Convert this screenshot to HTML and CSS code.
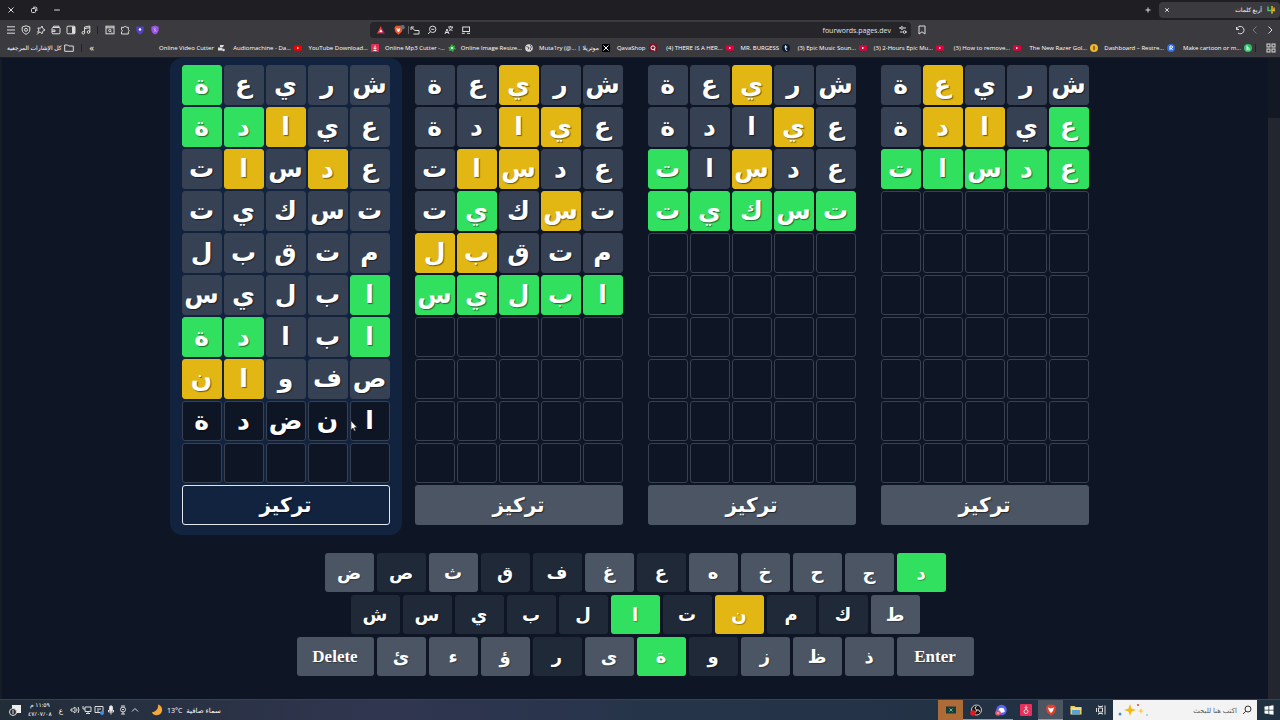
FILE: index.html
```html
<!DOCTYPE html>
<html lang="ar">
<head>
  <meta charset="UTF-8">
  <meta name="viewport" content="width=device-width, initial-scale=1.0">
  <title>أربع كلمات</title>
  <link rel="stylesheet" href="styles.css">
</head>
<body>
  <div class="desktop">
    <!-- Browser window -->
    <header class="browser">
      <div class="title-bar">
        <div class="window-buttons">
          <button aria-label="Close"><svg viewBox="0 0 8 8"><path d="M1.5 1.5l5 5M6.5 1.5l-5 5"/></svg></button>
          <button aria-label="Restore"><svg viewBox="0 0 8 8"><rect x="1.5" y="2.5" width="4" height="4" rx="1"/><path d="M3 1.2h2.8a1 1 0 0 1 1 1V5"/></svg></button>
          <button aria-label="Minimize"><svg viewBox="0 0 8 8"><path d="M1.2 4h5.6"/></svg></button>
        </div>
        <button class="new-tab" aria-label="New tab"><svg viewBox="0 0 8 8"><path d="M4 1.5v5M1.5 4h5"/></svg></button>
        <div class="tab">
          <button aria-label="Close tab"><svg viewBox="0 0 8 8"><path d="M2.2 2.2l3.6 3.6M5.8 2.2L2.2 5.8"/></svg></button>
          <span class="tab-title" dir="rtl">أربع كلمات</span>
          <svg class="favicon" viewBox="0 0 8 8"><path d="M1 .5v4h3.5" stroke="#4cc36a" stroke-width="1.5"/><path d="M5 0v7.8M7 1.5v3M5 4.6h3" stroke="#e2b714" stroke-width="1.5"/></svg>
        </div>
      </div>

      <div class="toolbar">
        <div class="tools">
          <button aria-label="Menu"><svg viewBox="0 0 10 10"><path d="M1 1.8h8M1 5h8M1 8.2h8"/></svg></button>
          <button aria-label="VPN"><svg viewBox="0 0 10 10"><path d="M5 .8l3.8 1.2v3C8.800 7 7 8.500 5 9.300 3 8.500 1.200 7 1.200 5V2z"/><circle cx="5" cy="4.800" r="1.500"/></svg></button>
          <button aria-label="Leo"><svg viewBox="0 0 10 10"><path d="M6 1l.7 2.300L9 5 6.700 6.300 6 8.800 4.300 7 1.600 7.200 3 5 1.800 3l2.700.2zM3.500 7L1 9.500"/></svg></button>
          <button aria-label="Wallet"><svg viewBox="0 0 10 10"><rect x="1" y="2.500" width="8" height="6.300" rx="1"/><path d="M2.500 2.500V1.200h5.500v1.300M1 5h3v1.600H1"/></svg></button>
          <button aria-label="Sidebar"><svg viewBox="0 0 10 10"><rect x="1" y="1.200" width="8" height="7.600" rx="1"/><rect x="6.500" y="2" width="2" height="6" fill="#ddd"/></svg></button>
          <button aria-label="Media"><svg viewBox="0 0 10 10"><circle cx="2.300" cy="7.800" r="1.300"/><circle cx="7.500" cy="7" r="1.300"/><path d="M3.600 7.800V2l5.200-1v6M3.600 3.600l5.200-1"/></svg></button>
          <span class="divider"></span>
          <button aria-label="Search tabs"><svg viewBox="0 0 10 10"><rect x="1" y="1.200" width="8" height="7.600"/><path d="M1 2.800h8"/><circle cx="4.800" cy="5.500" r="1.200"/><path d="M5.700 6.400l1.200 1.200"/></svg></button>
          <button aria-label="Extensions"><svg viewBox="0 0 10 10"><path d="M1.500 2.300H4a1.300 1.300 0 0 1 2.500 0h1.800v2.200a1.300 1.300 0 0 1 0 2.400V9H1.500V6.900a1.300 1.300 0 0 0 0-2.400z"/></svg></button>
          <button aria-label="Guard"><svg viewBox="0 0 10 10"><path d="M1.300 1.500h7.400v3C8.700 7 7 8.500 5 9.500 3 8.500 1.300 7 1.300 4.500z" fill="#5142c6" stroke="none"/><circle cx="5" cy="4.500" r="1.200" fill="#fff" stroke="none"/></svg></button>
          <button aria-label="Shield"><svg viewBox="0 0 10 10"><path d="M5 .5l3.700 1.200v3C8.700 7 7 8.500 5 9.500 3 8.500 1.300 7 1.300 4.700v-3z" fill="#9a55e0" stroke="none"/><path d="M3.500 3.500l3 3M5 2.500v4.500" stroke="#d9b5ff" stroke-width=".7"/></svg></button>
        </div>
        <div class="address">
          <svg viewBox="0 0 10 10"><path d="M5 1L1 8.800h8z" fill="#9e1f63" stroke="none"/><path d="M5 1L1 8.800l4-2.200z" fill="#ff4724" stroke="none"/><path d="M5 4.200L3.300 7.300h3.400z" fill="#fff" stroke="none"/></svg>
          <svg class="lion" viewBox="0 0 12 10"><path d="M3 .8h5l1.500 2-.7 4L5.500 9.700 2.200 6.800l-.8-4z" fill="#f1562b" stroke="none"/><path d="M3.500 3l2 1 2-1-.8 2.700-1.200 1.600L4 5.700z" fill="#fff" stroke="none"/><circle cx="9.500" cy="2.300" r="2.300" fill="#6b6d78" stroke="none"/></svg>
          <span class="divider"></span>
          <svg viewBox="0 0 10 10"><path d="M1 5V2h3M1.300 2.300L5 5.500h4V9H3.500"/></svg>
          <svg viewBox="0 0 10 10"><circle cx="5.700" cy="4.300" r="3.200"/><path d="M3.300 6.700L1 9M4.200 4.300h3"/></svg>
          <svg viewBox="0 0 10 10"><path d="M4 2h5M6.500 1v1M8.500 2c-.5 2-2 3-3.500 3.500M5 3c.8 1.500 2 2 3.500 2.500M1 9l2-5 2 5M1.700 7.500h2.600"/></svg>
          <svg viewBox="0 0 10 10"><rect x="1.700" y="2" width="6.800" height="4.500"/><path d="M.8 8.300h3M6 8.300h3"/></svg>
          <input class="url" aria-label="Address" value="fourwords.pages.dev">
          <svg viewBox="0 0 10 10"><path d="M1 3h2M6 3h2M2 7h2.500M7.500 7H9"/><circle cx="4" cy="3" r="1.300"/><circle cx="6.500" cy="7" r="1.300"/></svg>
        </div>
        <div class="nav-tools">
          <button aria-label="Bookmark"><svg viewBox="0 0 10 10"><path d="M2 1h6v8L5 6.800 2 9z"/></svg></button>
          <span class="spacer"></span>
          <button aria-label="Reload"><svg viewBox="0 0 10 10"><path d="M1.500 2v2.500H4M1.700 4.300A3.700 3.700 0 1 1 3 8"/></svg></button>
          <button class="dim" aria-label="Forward"><svg viewBox="0 0 10 10"><path d="M6.500 1.500L3 5l3.500 3.500"/></svg></button>
          <button aria-label="Back"><svg viewBox="0 0 10 10"><path d="M3.500 1.500L7 5 3.500 8.500"/></svg></button>
        </div>
      </div>

      <nav class="bookmarks">
        <a class="all-bookmarks" href="#"><span dir="rtl">كل الإشارات المرجعية</span><svg viewBox="0 0 10 8"><path d="M.7 1h3l1 1h4.600v5.300H.7z"/></svg></a>
        <span class="divider"></span>
        <span class="more">«</span>
        <div class="bookmark-list">
          <a class="bookmark" href="#"><span>Online Video Cutter</span><svg viewBox="0 0 8 8"><path d="M1 3.500h4.500v3H1zM3 1h4l-1 2H3z" fill="#ddd"/><circle cx="6.500" cy="6" r="1.300" fill="#ddd"/></svg></a>
          <a class="bookmark" href="#"><span>Audiomachine - Da...</span><svg viewBox="0 0 8 8"><rect y="1.300" width="8" height="5.400" rx="1.500" fill="#e00"/><path d="M3 2.800v2.400L5.200 4z" fill="#fff"/></svg></a>
          <a class="bookmark" href="#"><span>YouTube Download...</span><svg viewBox="0 0 8 8"><rect width="8" height="8" rx="1" fill="#e52b50"/><path d="M4 1.500v3.500M2.500 3.800L4 5.300l1.500-1.500M2.500 6.500h3" stroke="#fff" fill="none"/></svg></a>
          <a class="bookmark" href="#"><span>Online Mp3 Cutter -...</span><svg viewBox="0 0 8 8"><path d="M4 0l1 2 2-.5L6.500 3.500 8 5l-2 .5L5 8 3.500 6.500 1 7l.5-2L0 3.500 2 3z" fill="#39b54a"/><circle cx="4" cy="4" r="1" fill="#fff"/></svg></a>
          <a class="bookmark" href="#"><span>Online Image Resize...</span><svg viewBox="0 0 8 8"><circle cx="4" cy="4" r="3.800" fill="#ddd"/><path d="M1.500 2.500l2.500 1-1 2M5 .8L6.500 3 5 5l1.500 1.500" stroke="#555" fill="none"/></svg></a>
          <a class="bookmark" href="#"><span>Muta1ry (@... | موتريلا</span><svg viewBox="0 0 8 8"><rect width="8" height="8" fill="#000"/><path d="M1.500 1.500l5 5M6.500 1.500l-5 5" stroke="#fff"/></svg></a>
          <a class="bookmark short" href="#"><span>QavaShop</span><svg viewBox="0 0 8 8"><rect width="8" height="8" rx="1" fill="#7b1027"/><circle cx="4" cy="3.800" r="2" stroke="#fff" fill="none"/><path d="M4.500 4.800L6 6.800" stroke="#fff"/></svg></a>
          <a class="bookmark" href="#"><span>(4) THERE IS A HER...</span><svg viewBox="0 0 8 8"><rect y="1.300" width="8" height="5.400" rx="1.500" fill="#e0003c"/><path d="M3 2.800v2.400L5.200 4z" fill="#fff"/></svg></a>
          <a class="bookmark short" href="#"><span>MR. BURGESS</span><svg viewBox="0 0 8 8"><circle cx="4" cy="4" r="4" fill="#071a2f"/><path d="M3.700 1.300v4.200q0 1 1.500.8M2.500 3h2.700" stroke="#fff" fill="none"/></svg></a>
          <a class="bookmark" href="#"><span>(3) Epic Music Soun...</span><svg viewBox="0 0 8 8"><rect y="1.300" width="8" height="5.400" rx="1.500" fill="#e0003c"/><path d="M3 2.800v2.400L5.200 4z" fill="#fff"/></svg></a>
          <a class="bookmark" href="#"><span>(3) 2-Hours Epic Mu...</span><svg viewBox="0 0 8 8"><rect y="1.300" width="8" height="5.400" rx="1.500" fill="#e0003c"/><path d="M3 2.800v2.400L5.200 4z" fill="#fff"/></svg></a>
          <a class="bookmark" href="#"><span>(3) How to remove...</span><svg viewBox="0 0 8 8"><rect y="1.300" width="8" height="5.400" rx="1.500" fill="#e0003c"/><path d="M3 2.800v2.400L5.200 4z" fill="#fff"/></svg></a>
          <a class="bookmark" href="#"><span>The New Razer Gol...</span><svg viewBox="0 0 8 8"><circle cx="4" cy="4" r="4" fill="#e8b92c"/><path d="M3 2h2v4H3z" fill="#a8641a"/></svg></a>
          <a class="bookmark" href="#"><span>Dashboard – Restre...</span><svg viewBox="0 0 8 8"><circle cx="4" cy="4" r="4" fill="#2d6ce5"/><path d="M3 6.200V2h1.500a1 1 0 0 1 0 2.200H3M4.300 4.200L5.500 6.200" stroke="#fff" fill="none"/></svg></a>
          <a class="bookmark" href="#"><span>Make cartoon or m...</span><svg viewBox="0 0 8 8"><circle cx="4" cy="4" r="4" fill="#2cc069"/><path d="M3 1.500v5M3 4q2-1 2 .5v2" stroke="#fff" fill="none"/></svg></a>
        </div>
        <span class="divider"></span>
        <button class="apps" aria-label="Apps"><svg viewBox="0 0 10 10"><rect x="1" y="1" width="3" height="3"/><rect x="6" y="1" width="3" height="3"/><rect x="1" y="6" width="3" height="3"/><rect x="6" y="6" width="3" height="3"/></svg></button>
      </nav>
    </header>

    <!-- Game -->
    <div class="page">
      <main class="game">
        <div class="boards" id="boards" dir="rtl"></div>
        <div class="keyboard" id="keyboard"></div>
      </main>
      <div class="scrollbar"><div class="thumb"></div></div>
    </div>

    <!-- Taskbar -->
    <footer class="taskbar">
      <div class="tray">
        <svg viewBox="0 0 12 12"><path d="M3 1h9v8H8l-2 2V9H3z" fill="#eee" stroke="none"/><circle cx="4" cy="8" r="3.500" fill="#252d38"/><path d="M4 6v4"/></svg>
        <div class="clock" dir="rtl"><div>١١:٥٩ م</div><div>٤٧/٠٧/٠٨</div></div>
        <span class="lang">ع</span>
        <div class="tray-icons">
          <svg viewBox="0 0 10 10"><path d="M1 4h1.500L5 2v6L2.500 6H1zM6.500 3.500q1 1.500 0 3M8 2q2 3 0 6"/></svg>
          <svg viewBox="0 0 10 10"><path d="M3 2h6v4.500H3zM1 1v3M4 8.500h4M6 6.500v2M1 4h2"/></svg>
          <svg viewBox="0 0 10 10"><path d="M1 1.500h8v6H1zM3 4h4M3 6h2"/><circle cx="8" cy="8" r="2" fill="#3b8ee0" stroke="none"/></svg>
          <svg viewBox="0 0 10 10"><rect x="3.500" y=".8" width="3" height="5.500" rx="1.500" fill="#eee"/><path d="M2.500 5v2h5V5M5 7v2.500"/></svg>
          <svg viewBox="0 0 10 10"><circle cx="5" cy="4.500" r="2.500"/><path d="M3 1h4M3 9h4M5 7v2M4 4.500h2"/></svg>
          <svg viewBox="0 0 10 10"><path d="M2 6.500l3-3 3 3"/></svg>
        </div>
        <div class="weather">
          <svg viewBox="0 0 12 12"><path d="M7 .5Q8 6.500 .8 8.500A5.500 5.500 0 1 0 7 .5z" fill="#f3a93c" stroke="none"/></svg>
          <span>13°C</span>
          <span dir="rtl">سماء صافية</span>
        </div>
      </div>
      <div class="apps-bar">
        <button class="app orange" aria-label="Game"><svg viewBox="0 0 12 12"><rect x="1" y="2.500" width="10" height="7" fill="#183c38" stroke="none"/><path d="M4.500 4.500l3 3M7.500 4.500l-3 3" stroke="#5cba8c"/></svg></button>
        <button class="app open" aria-label="OBS"><svg viewBox="0 0 12 12"><circle cx="6.500" cy="6" r="5" fill="#17181c" stroke="#ccc"/><path d="M6.500 6q-3-2 0-4M6.500 6q3-1 3.500 2M6.500 6q0 3-3 3"/><circle cx="3" cy="9" r="2.800" fill="#e01b24" stroke="none"/></svg></button>
        <button class="app open" aria-label="Discord"><svg viewBox="0 0 12 12"><circle cx="6.500" cy="6" r="5.300" fill="#5865f2" stroke="none"/><path d="M4 4.500q2.500-1.500 5 0l.8 3.300q-3.300 1.700-6.600 0z" fill="#fff" stroke="none"/><circle cx="3" cy="9" r="2.800" fill="#e2556b" stroke="none"/><path d="M1.800 9h2.400"/></svg></button>
        <button class="app" aria-label="Downloader"><svg viewBox="0 0 12 12"><rect width="12" height="12" rx="1" fill="#e8305a" stroke="none"/><circle cx="6" cy="7.500" r="2"/><path d="M6 1.500v3M4.500 3L6 4.800 7.500 3"/></svg></button>
        <button class="app active" aria-label="Brave"><svg viewBox="0 0 12 12"><path d="M3 .8h6l2 2.400-1 5L6 11.500 2 8.200l-1-5z" fill="#ea3f2b" stroke="none"/><path d="M3 3.500l3 1 3-1-1.200 3.500L6 9 4.200 7z" fill="#fff" stroke="none"/></svg></button>
        <button class="app" aria-label="Files"><svg viewBox="0 0 12 12"><path d="M.5 2h4l1 1h6v7.500H.5z" fill="#f6cf57" stroke="none"/><path d="M2 6h8v4.500H2z" fill="#56a3d9" stroke="none"/><path d="M.5 5h11" stroke="#fbe69b"/></svg></button>
        <button class="app" aria-label="Task view"><svg viewBox="0 0 12 12"><path d="M3.500 4h4v4h-4zM3.500 1.500v1h4v-1M3.500 10.500v-1h4v1M10 1.500v9M1.500 4v4"/></svg></button>
        <div class="search">
          <svg class="sparkles" viewBox="0 0 32 14"><path d="M12 1l1.500 4.500L18 7l-4.500 1.500L12 13l-1.500-4.500L6 7l4.500-1.500z" fill="#f4b813"/><path d="M23 5l.8 2.200L26 8l-2.200.8L23 11l-.8-2.200L20 8l2.200-.8z" fill="#f8cb48"/><circle cx="2" cy="11" r="1.500" fill="#3d8ee0"/><circle cx="20" cy="2" r="1" fill="#d8453a"/><circle cx="29" cy="12" r="1" fill="#9cc"/></svg>
          <input type="text" dir="rtl" aria-label="Search" placeholder="اكتب هنا للبحث">
          <svg class="glass" viewBox="0 0 10 10"><circle cx="6" cy="4" r="3"/><path d="M3.800 6.200L1 9"/></svg>
        </div>
        <button class="start" aria-label="Start"><svg viewBox="0 0 10 10"><path d="M.5 1.500l4-.5v3.700h-4zM5.200.9L9.500.3v4.400H5.200zM.5 5.400h4v3.700l-4-.5zM5.200 5.400h4.300v4.400l-4.300-.6z" fill="#fff" stroke="none"/></svg></button>
      </div>
    </footer>

    <svg class="cursor" viewBox="0 0 8 12"><path d="M1 .8v9l2-1.800 1.300 3 1.300-.6-1.300-2.800h2.700z" fill="#fff" stroke="#222" stroke-width=".6"/></svg>
  </div>

  <script>
    const ROWS = 10;
    const guesses = ['شريعة', 'عيادة', 'عدسات', 'تسكيت', 'متقبل', 'ابليس', 'ابادة', 'صفوان'];
    const current = 'انضدة';

    // a = absent, p = present, c = correct
    const boards = [
      { marks: ['aaapa', 'cappa', 'ccccc'] },
      { marks: ['aapaa', 'apaaa', 'aapac', 'ccccc'] },
      { marks: ['aapaa', 'appaa', 'aappa', 'apaca', 'aaapp', 'ccccc'] },
      { marks: ['aaaac', 'aapcc', 'apapa', 'aaaaa', 'aaaaa', 'caaaa', 'caacc', 'aaapp'], focused: true }
    ];
    const markClass = { a: 'absent', p: 'present', c: 'correct' };

    const keyRows = [
      ['ض', 'ص', 'ث', 'ق', 'ف', 'غ', 'ع', 'ه', 'خ', 'ح', 'ج', 'د'],
      ['ش', 'س', 'ي', 'ب', 'ل', 'ا', 'ت', 'ن', 'م', 'ك', 'ط'],
      ['Delete', 'ئ', 'ء', 'ؤ', 'ر', 'ى', 'ة', 'و', 'ز', 'ظ', 'ذ', 'Enter']
    ];
    const keyMarks = { correct: 'داة', present: 'ن', absent: 'صقفعشسيبلتمكرو' };

    function renderBoards() {
      const container = document.getElementById('boards');
      boards.forEach(board => {
        const el = document.createElement('section');
        el.className = board.focused ? 'board focused' : 'board';
        let cells = '';
        for (let r = 0; r < ROWS; r++) {
          const marks = board.marks[r];
          const word = marks ? guesses[r] : (board.focused && r === board.marks.length ? current : '');
          for (let c = 0; c < 5; c++) {
            const state = marks ? markClass[marks[c]] : '';
            cells += `<div class="cell ${state}">${word[c] || ''}</div>`;
          }
        }
        el.innerHTML = `<div class="grid">${cells}</div><button class="focus-btn">تركيز</button>`;
        container.appendChild(el);
      });
    }

    function renderKeyboard() {
      const container = document.getElementById('keyboard');
      keyRows.forEach(keys => {
        const row = document.createElement('div');
        row.className = 'key-row';
        keys.forEach(key => {
          const state = Object.keys(keyMarks).find(m => keyMarks[m].includes(key)) || '';
          const btn = document.createElement('button');
          btn.className = `key ${state} ${key.length > 1 ? 'wide' : ''}`;
          btn.textContent = key;
          row.appendChild(btn);
        });
        container.appendChild(row);
      });
    }

    renderBoards();
    renderKeyboard();
  </script>
</body>
</html>
```

FILE: styles.css
```css
* {
  box-sizing: border-box;
}
body {
  margin: 0;
  background-color: #0e1525;
  color: white;
  font-family: "Open Sans", "DejaVu Sans", sans-serif;
}
button {
  padding: 0;
  border: none;
  background: none;
  color: inherit;
  font-family: inherit;
  cursor: pointer;
}
a {
  color: inherit;
  text-decoration: none;
}
svg {
  display: block;
  flex: none;
  fill: none;
  stroke: #ddd;
}
.desktop {
  position: relative;
  display: flex;
  flex-direction: column;
  min-height: 100vh;
}
.spacer {
  flex: 1;
}
.divider {
  width: 1px;
  height: 8px;
  background-color: #222226;
}

/* Browser */
.browser {
  background-color: #3b3b3f;
  font-size: 7px;
}
.title-bar {
  display: flex;
  align-items: center;
  height: 20px;
  background-color: #1f1e23;
}
.title-bar svg {
  width: 8px;
  height: 8px;
}
.window-buttons {
  display: flex;
  gap: 15px;
  padding-left: 7px;
  flex: 1;
}
.new-tab {
  margin-right: 7px;
}
.tab {
  display: flex;
  align-items: center;
  gap: 5px;
  width: 121px;
  height: 16px;
  padding: 0 5px 0 4px;
  border-radius: 4px;
  background-color: #3b3b3f;
}
.tab-title {
  flex: 1;
  font-size: 6px;
}
.favicon {
  stroke: none;
}
.toolbar {
  display: flex;
  align-items: center;
  height: 20px;
}
.toolbar svg {
  width: 10px;
  height: 10px;
}
.tools {
  display: flex;
  align-items: center;
  gap: 5px;
  width: 370px;
  padding-left: 6px;
}
.tools .divider {
  margin: 0 2px 0 1px;
}
.address {
  display: flex;
  align-items: center;
  gap: 7px;
  flex: 1;
  height: 16px;
  padding: 0 3px 0 6px;
  border-radius: 4px;
  background-color: #26262a;
}
.address .divider {
  background-color: #66666c;
  margin: 0 -6px 0 -4px;
}
.address .lion {
  width: 12px;
}
.url {
  flex: 1;
  min-width: 0;
  padding: 0;
  border: none;
  background: none;
  color: #e4e4e6;
  font: 7px "Open Sans", sans-serif;
  text-align: right;
}
.nav-tools {
  display: flex;
  align-items: center;
  gap: 5px;
  width: 369px;
  padding: 0 5px 0 6px;
}
.dim {
  opacity: 0.4;
}
.bookmarks {
  display: flex;
  align-items: center;
  height: 17px;
  padding: 0 4px 2px 7px;
  white-space: nowrap;
}
.all-bookmarks {
  display: flex;
  align-items: center;
  gap: 2px;
  margin-right: 7px;
  font-size: 6px;
}
.all-bookmarks svg {
  width: 10px;
  height: 8px;
}
.more {
  margin-left: 8px;
  font-size: 9px;
}
.bookmark-list {
  display: flex;
  flex: 1;
  justify-content: flex-end;
  gap: 7px;
  margin-right: 3px;
}
.bookmark {
  display: flex;
  align-items: center;
  justify-content: flex-end;
  gap: 3px;
  width: 70px;
  font-size: 6px;
}
.bookmark.short {
  width: auto;
}
.bookmark svg {
  width: 8px;
  height: 8px;
  stroke: none;
}
.apps {
  margin-left: 10px;
}
.apps svg {
  width: 10px;
  height: 10px;
}

/* Game */
.page {
  display: flex;
  flex: 1;
  border-top: 1px solid #1a2030;
  border-left: 2px solid #161b28;
}
.game {
  flex: 1;
  display: flex;
  flex-direction: column;
  align-items: center;
  gap: 18px;
}
.scrollbar {
  display: flex;
  width: 12px;
  padding-top: 60px;
  background-color: #131825;
}
.thumb {
  flex: 1;
  background-color: #23252f;
}
.boards {
  display: grid;
  grid-template-columns: repeat(4, 232px);
  gap: 1px;
}
.board {
  padding: 7px 12px 10px;
  border-radius: 12px;
}
.board.focused {
  background-color: #12233f;
}
.grid {
  display: grid;
  grid-template-columns: repeat(5, 1fr);
  grid-auto-rows: 40px;
  gap: 2px;
  margin-bottom: 2px;
}
.cell {
  display: flex;
  align-items: center;
  justify-content: center;
  border: 1px solid #374151;
  border-radius: 3px;
  background-color: #0e1525;
  font: bold 25px/38px "DejaVu Sans", sans-serif;
  text-shadow: 1px 1px 1px rgba(0, 0, 0, 0.5);
}
.cell.absent {
  background-color: #364153;
}
.cell.present,
.key.present {
  border-color: #e2b714;
  background-color: #e2b714;
}
.cell.correct,
.key.correct {
  border-color: #32e060;
  background-color: #32e060;
}
.focus-btn {
  display: block;
  width: 100%;
  height: 40px;
  border-radius: 3px;
  background-color: #4b5563;
  font: bold 20px/36px "DejaVu Sans", sans-serif;
  text-shadow: 1px 1px 1px rgba(0, 0, 0, 0.5);
}
.focused .focus-btn {
  border: 1px solid #e5e7eb;
  background-color: #12233f;
}
.keyboard {
  display: flex;
  flex-direction: column;
  gap: 3px;
  padding-bottom: 22px;
}
.key-row {
  display: flex;
  justify-content: center;
  gap: 3px;
}
.key {
  width: 49px;
  height: 39px;
  border-radius: 3px;
  background-color: #4b5563;
  font: bold 18px "DejaVu Sans", sans-serif;
  text-shadow: 1px 1px 1px rgba(0, 0, 0, 0.3);
}
.key.absent {
  background-color: #1f2937;
}
.key.wide {
  width: 77px;
  font: bold 17px "Liberation Serif", serif;
}

/* Taskbar */
.taskbar {
  display: flex;
  justify-content: space-between;
  height: 21px;
  border-top: 1px solid #3a4250;
  background: linear-gradient(90deg, #222d38, #303650 30%, #26344a 50%, #1f3040);
}
.tray {
  display: flex;
  align-items: center;
  gap: 7px;
  padding-left: 9px;
  font-size: 7px;
}
.tray svg {
  width: 12px;
  height: 12px;
}
.clock {
  font-size: 6px;
  line-height: 9px;
  text-align: center;
}
.tray-icons {
  display: flex;
  gap: 2px;
}
.tray .tray-icons svg {
  width: 10px;
  height: 10px;
}
.weather {
  display: flex;
  align-items: center;
  gap: 4px;
  margin-left: 4px;
}
.apps-bar {
  display: flex;
}
.app {
  display: flex;
  align-items: center;
  justify-content: center;
  width: 25px;
  border-bottom: 1px solid transparent;
}
.app svg {
  width: 12px;
  height: 12px;
}
.app.open {
  border-color: #6aa5d8;
}
.app.orange {
  background-color: #ad6b38;
}
.app.active {
  border-color: #6aa5d8;
  background-color: #4c5663;
}
.search {
  display: flex;
  align-items: center;
  gap: 5px;
  width: 144px;
  padding: 0 5px;
  background-color: #f3f3f3;
}
.search input {
  flex: 1;
  min-width: 0;
  padding: 0;
  border: none;
  background: none;
  font: 7px "Open Sans", "DejaVu Sans", sans-serif;
}
.search input::placeholder {
  color: #555;
}
.sparkles {
  width: 32px;
  height: 14px;
  stroke: none;
}
.glass {
  width: 10px;
  height: 10px;
  stroke: #333;
}
.start {
  display: flex;
  align-items: center;
  justify-content: center;
  width: 23px;
}
.start svg {
  width: 10px;
  height: 10px;
}

.cursor {
  position: absolute;
  left: 350px;
  top: 420px;
  width: 8px;
  height: 12px;
}
```
